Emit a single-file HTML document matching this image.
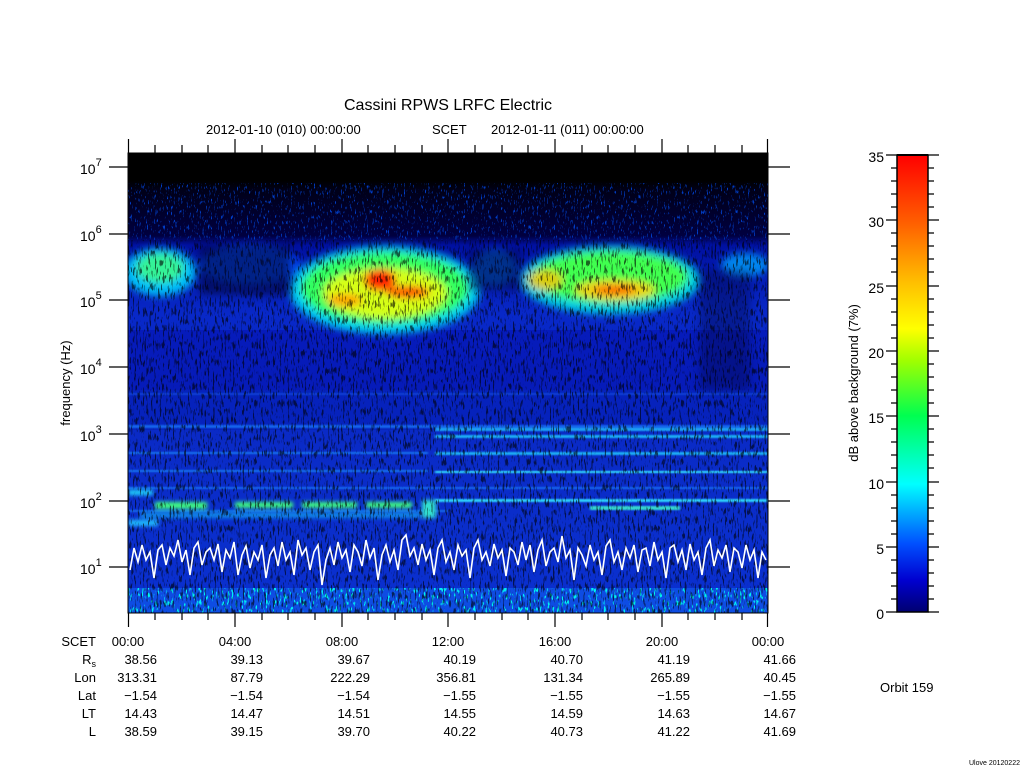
<!DOCTYPE html>
<html><head><meta charset="utf-8"><style>
html,body{margin:0;padding:0;background:#fff;}
svg{display:block;}
text{font-family:"Liberation Sans",sans-serif;fill:#000;}
</style></head><body>
<svg width="1024" height="768" viewBox="0 0 1024 768" xmlns="http://www.w3.org/2000/svg">
<defs>
<filter id="b4" x="-30%" y="-30%" width="160%" height="160%"><feGaussianBlur stdDeviation="4"/></filter>
<filter id="b2" x="-30%" y="-30%" width="160%" height="160%"><feGaussianBlur stdDeviation="2"/></filter>
<filter id="b1" x="-10%" y="-50%" width="120%" height="200%"><feGaussianBlur stdDeviation="1 0.8"/></filter>
<filter id="spk" x="0" y="0" width="100%" height="100%">
<feTurbulence type="fractalNoise" baseFrequency="0.6 0.12" numOctaves="2" seed="3"/>
<feColorMatrix type="matrix" values="0 0 0 0 0  0 0 0 0 0  0 0 0 0 0  9 0 0 0 -5.0"/>
</filter>
<filter id="spk2" x="0" y="0" width="100%" height="100%">
<feTurbulence type="fractalNoise" baseFrequency="0.7 0.2" numOctaves="2" seed="9"/>
<feColorMatrix type="matrix" values="0 0 0 0 0  0 0 0 0 0.05  0 0 0 0 0.6  9 0 0 0 -5.6"/>
</filter>
<filter id="spk3" x="0" y="0" width="100%" height="100%">
<feTurbulence type="fractalNoise" baseFrequency="0.5 0.15" numOctaves="2" seed="5"/>
<feColorMatrix type="matrix" values="0 0 0 0 0  0 0 0 0 0.9  0 0 0 0 0.9  10 0 0 0 -6"/>
</filter>
<linearGradient id="cb" x1="0" y1="1" x2="0" y2="0">
<stop offset="0" stop-color="#000070"/>
<stop offset="0.07" stop-color="#0000d0"/>
<stop offset="0.15" stop-color="#0050ff"/>
<stop offset="0.28" stop-color="#00ffff"/>
<stop offset="0.43" stop-color="#00ff50"/>
<stop offset="0.55" stop-color="#a0ff00"/>
<stop offset="0.62" stop-color="#ffff00"/>
<stop offset="0.72" stop-color="#ffc000"/>
<stop offset="0.85" stop-color="#ff6000"/>
<stop offset="1" stop-color="#ff0000"/>
</linearGradient>
<linearGradient id="bg" x1="0" y1="0" x2="0" y2="1">
<stop offset="0" stop-color="#000000"/>
<stop offset="0.06" stop-color="#000000"/>
<stop offset="0.08" stop-color="#000018"/>
<stop offset="0.18" stop-color="#000040"/>
<stop offset="0.2" stop-color="#0010a0"/>
<stop offset="0.35" stop-color="#0828c8"/>
<stop offset="0.5" stop-color="#0a28c4"/>
<stop offset="0.7" stop-color="#0a2cc8"/>
<stop offset="1" stop-color="#0a30d0"/>
</linearGradient>
<clipPath id="pc"><rect x="128" y="153" width="640" height="460"/></clipPath>
</defs>

<g clip-path="url(#pc)">
<rect x="128" y="153" width="640" height="460" fill="url(#bg)"/>
<rect x="128" y="183" width="640" height="57" fill="#000" filter="url(#spk2)"/>
<rect x="128" y="330" width="640" height="60" fill="#0000a0" opacity="0.3"/>
<rect x="128" y="390" width="640" height="40" fill="#0018b0" opacity="0.4"/>
<g filter="url(#b1)">
<rect x="128" y="425" width="640" height="3" fill="#2080ff" opacity="0.7"/>
<rect x="435" y="428" width="333" height="3" fill="#20c0ff" opacity="0.8"/>
<rect x="435" y="435" width="333" height="3" fill="#20d0ff" opacity="0.8"/>
<rect x="435" y="452" width="333" height="3" fill="#20d0ff" opacity="0.8"/>
<rect x="128" y="452" width="300" height="2" fill="#2090ff" opacity="0.7"/>
<rect x="435" y="471" width="333" height="2" fill="#30e0ff"/>
<rect x="435" y="499" width="333" height="3" fill="#30e0ff" opacity="0.9"/>
<rect x="590" y="506" width="90" height="4" fill="#40ffd0" opacity="0.8"/>
<rect x="128" y="487" width="640" height="2" fill="#2080ff" opacity="0.7"/>
<rect x="128" y="470" width="300" height="2" fill="#2090ff" opacity="0.7"/>
<rect x="128" y="510" width="320" height="2" fill="#2090ff" opacity="0.6"/>
<rect x="128" y="393" width="640" height="2" fill="#1050e0" opacity="0.7"/>
</g>
<g filter="url(#b2)">
<rect x="155" y="502" width="52" height="7" fill="#40ff80"/>
<rect x="235" y="502" width="58" height="6" fill="#40ff80"/>
<rect x="302" y="502" width="55" height="6" fill="#40ff80"/>
<rect x="366" y="502" width="46" height="6" fill="#40ff80"/>
<rect x="140" y="512" width="280" height="6" fill="#10a0f0" opacity="0.8"/>
<rect x="128" y="520" width="30" height="6" fill="#20c0ff"/>
<rect x="128" y="490" width="25" height="5" fill="#20e0ff"/>
<rect x="422" y="500" width="14" height="18" fill="#30e0d0"/>
</g>
<g filter="url(#b4)">
<ellipse cx="160" cy="272" rx="36" ry="24" fill="#00d0ff" opacity="0.9"/>
<ellipse cx="160" cy="268" rx="24" ry="15" fill="#40ff80" opacity="0.8"/>
<ellipse cx="250" cy="265" rx="50" ry="20" fill="#0050ff" opacity="0.8"/>
<ellipse cx="385" cy="290" rx="95" ry="44" fill="#00d0f0"/>
<ellipse cx="385" cy="288" rx="84" ry="36" fill="#30ff60"/>
<ellipse cx="385" cy="293" rx="62" ry="25" fill="#ffff00" opacity="0.8"/>
<ellipse cx="380" cy="280" rx="16" ry="11" fill="#ff2000"/>
<ellipse cx="408" cy="292" rx="22" ry="6" fill="#ff4000"/>
<ellipse cx="345" cy="300" rx="18" ry="6" fill="#ffa000"/>
<ellipse cx="495" cy="268" rx="22" ry="18" fill="#0080ff" opacity="0.7"/>
<ellipse cx="610" cy="280" rx="90" ry="34" fill="#00d0e0"/>
<ellipse cx="610" cy="277" rx="78" ry="26" fill="#40ff50"/>
<ellipse cx="615" cy="290" rx="40" ry="10" fill="#ffd000" opacity="0.9"/>
<ellipse cx="615" cy="290" rx="22" ry="4" fill="#ff4000"/>
<ellipse cx="545" cy="280" rx="18" ry="10" fill="#ffc000" opacity="0.8"/>
<ellipse cx="745" cy="265" rx="24" ry="12" fill="#00a0ff" opacity="0.8"/>
</g>
<rect x="128" y="588" width="640" height="25" fill="#1060f0" opacity="0.6"/>
<rect x="128" y="588" width="640" height="25" fill="#000" filter="url(#spk3)"/>
<rect x="128" y="240" width="640" height="373" fill="#000" filter="url(#spk)" opacity="0.6"/>
<rect x="200" y="245" width="90" height="50" fill="#000020" opacity="0.5" filter="url(#b4)"/>
<rect x="470" y="250" width="50" height="40" fill="#000030" opacity="0.5" filter="url(#b4)"/>
<rect x="700" y="270" width="50" height="120" fill="#000020" opacity="0.3" filter="url(#b4)"/>
<rect x="128" y="153" width="640" height="28" fill="#000"/>
<polyline fill="none" stroke="#fff" stroke-width="1.6" points="130,570 134,548 138,562 142,545 146,560 150,552 154,578 158,550 162,545 166,565 170,548 174,556 178,540 182,562 186,550 190,575 194,548 198,542 202,565 206,552 210,548 214,560 218,544 222,572 226,550 230,558 234,542 238,575 242,555 246,546 250,568 254,552 258,560 262,545 266,578 270,555 274,548 278,566 282,542 286,560 290,552 294,575 298,540 302,555 306,548 310,570 314,552 318,545 322,585 326,560 330,548 334,565 338,542 342,558 346,550 350,572 354,545 358,552 362,566 366,540 370,558 374,548 378,580 382,555 386,545 390,562 394,550 398,570 402,540 406,535 410,556 414,548 418,565 422,544 426,560 430,550 434,575 438,548 442,540 446,562 450,552 454,570 458,545 462,556 466,550 470,578 474,548 478,540 482,560 486,552 490,566 494,544 498,558 502,550 506,576 510,548 514,552 518,565 522,542 526,560 530,545 534,572 538,550 542,540 546,566 550,552 554,548 558,562 562,536 566,558 570,550 574,580 578,548 582,555 586,566 590,545 594,560 598,552 602,575 606,546 610,540 614,562 618,552 622,570 626,548 630,558 634,545 638,572 642,550 646,548 650,566 654,542 658,560 662,552 666,578 670,548 674,545 678,562 682,550 686,570 690,544 694,560 698,552 702,575 706,548 710,540 714,566 718,550 722,558 726,545 730,572 734,548 738,552 742,568 746,545 750,560 754,550 758,578 762,552 766,560"/>
</g>
<rect x="128" y="153" width="640" height="460" fill="none" stroke="#000" stroke-width="1"/>

<g stroke="#000" stroke-width="1.2">
<path d="M128.5 139V153M235 139V153M342 139V153M448 139V153M555 139V153M662 139V153M767.5 139V153"/>
<path d="M155 145V153M182 145V153M208 145V153M262 145V153M288 145V153M315 145V153M368 145V153M395 145V153M422 145V153M475 145V153M502 145V153M528 145V153M582 145V153M608 145V153M635 145V153M688 145V153M715 145V153M742 145V153"/>
<path d="M128.5 613V627M235 613V627M342 613V627M448 613V627M555 613V627M662 613V627M767.5 613V627"/>
<path d="M155 613V620M182 613V620M208 613V620M262 613V620M288 613V620M315 613V620M368 613V620M395 613V620M422 613V620M475 613V620M502 613V620M528 613V620M582 613V620M608 613V620M635 613V620M688 613V620M715 613V620M742 613V620"/>
<path d="M109 167H128M109 234H128M109 300H128M109 367H128M109 434H128M109 501H128M109 567H128"/>
<path d="M768 167H790M768 234H790M768 300H790M768 367H790M768 434H790M768 501H790M768 567H790"/>
</g>

<g font-size="14">
<text x="80" y="174">10<tspan font-size="11" dy="-8">7</tspan></text>
<text x="80" y="241">10<tspan font-size="11" dy="-8">6</tspan></text>
<text x="80" y="307">10<tspan font-size="11" dy="-8">5</tspan></text>
<text x="80" y="374">10<tspan font-size="11" dy="-8">4</tspan></text>
<text x="80" y="441">10<tspan font-size="11" dy="-8">3</tspan></text>
<text x="80" y="508">10<tspan font-size="11" dy="-8">2</tspan></text>
<text x="80" y="574">10<tspan font-size="11" dy="-8">1</tspan></text>
</g>
<text x="0" y="0" font-size="13" text-anchor="middle" transform="translate(70,383) rotate(-90)">frequency (Hz)</text>

<text x="448" y="110" font-size="16" text-anchor="middle">Cassini RPWS LRFC Electric</text>
<text x="206" y="134" font-size="13">2012-01-10 (010) 00:00:00</text>
<text x="432" y="134" font-size="13">SCET</text>
<text x="491" y="134" font-size="13">2012-01-11 (011) 00:00:00</text>

<rect x="897" y="155" width="31" height="457" fill="url(#cb)" stroke="#000" stroke-width="1.5"/>
<rect x="897" y="154" width="31" height="2" fill="#000"/>
<g stroke="#000" stroke-width="1.2">
<path d="M886 155H897M886 220H897M886 286H897M886 351H897M886 416H897M886 482H897M886 547H897M886 612H897"/>
<path d="M928 155H939M928 220H939M928 286H939M928 351H939M928 416H939M928 482H939M928 547H939M928 612H939"/>
<path d="M891 168H897M891 181H897M891 194H897M891 207H897M891 233H897M891 246H897M891 259H897M891 272H897M891 299H897M891 312H897M891 325H897M891 338H897M891 364H897M891 377H897M891 390H897M891 403H897M891 429H897M891 442H897M891 455H897M891 468H897M891 495H897M891 508H897M891 521H897M891 534H897M891 560H897M891 573H897M891 586H897M891 599H897"/>
<path d="M928 168H934M928 181H934M928 194H934M928 207H934M928 233H934M928 246H934M928 259H934M928 272H934M928 299H934M928 312H934M928 325H934M928 338H934M928 364H934M928 377H934M928 390H934M928 403H934M928 429H934M928 442H934M928 455H934M928 468H934M928 495H934M928 508H934M928 521H934M928 534H934M928 560H934M928 573H934M928 586H934M928 599H934"/>
</g>
<g font-size="14" text-anchor="end">
<text x="884" y="162">35</text><text x="884" y="227">30</text><text x="884" y="293">25</text>
<text x="884" y="358">20</text><text x="884" y="423">15</text><text x="884" y="489">10</text>
<text x="884" y="554">5</text><text x="884" y="619">0</text>
</g>
<text x="0" y="0" font-size="13" text-anchor="middle" transform="translate(858,383) rotate(-90)">dB above background (7%)</text>

<g font-size="13">
<g text-anchor="end">
<text x="96" y="646">SCET</text>
<text x="96" y="664">R<tspan font-size="9" dy="3">s</tspan></text>
<text x="96" y="682">Lon</text>
<text x="96" y="700">Lat</text>
<text x="96" y="718">LT</text>
<text x="96" y="736">L</text>
</g>
<g text-anchor="middle">
<text x="128" y="646">00:00</text><text x="235" y="646">04:00</text><text x="342" y="646">08:00</text><text x="448" y="646">12:00</text><text x="555" y="646">16:00</text><text x="662" y="646">20:00</text><text x="768" y="646">00:00</text>
</g>
<g text-anchor="end">
<text x="157" y="664">38.56</text><text x="263" y="664">39.13</text><text x="370" y="664">39.67</text><text x="476" y="664">40.19</text><text x="583" y="664">40.70</text><text x="690" y="664">41.19</text><text x="796" y="664">41.66</text>
<text x="157" y="682">313.31</text><text x="263" y="682">87.79</text><text x="370" y="682">222.29</text><text x="476" y="682">356.81</text><text x="583" y="682">131.34</text><text x="690" y="682">265.89</text><text x="796" y="682">40.45</text>
<text x="157" y="700">−1.54</text><text x="263" y="700">−1.54</text><text x="370" y="700">−1.54</text><text x="476" y="700">−1.55</text><text x="583" y="700">−1.55</text><text x="690" y="700">−1.55</text><text x="796" y="700">−1.55</text>
<text x="157" y="718">14.43</text><text x="263" y="718">14.47</text><text x="370" y="718">14.51</text><text x="476" y="718">14.55</text><text x="583" y="718">14.59</text><text x="690" y="718">14.63</text><text x="796" y="718">14.67</text>
<text x="157" y="736">38.59</text><text x="263" y="736">39.15</text><text x="370" y="736">39.70</text><text x="476" y="736">40.22</text><text x="583" y="736">40.73</text><text x="690" y="736">41.22</text><text x="796" y="736">41.69</text>
</g>
<text x="880" y="692">Orbit 159</text>
</g>
<text x="1020" y="765" font-size="7" text-anchor="end">Ulove 20120222</text>
</svg>
</body></html>
